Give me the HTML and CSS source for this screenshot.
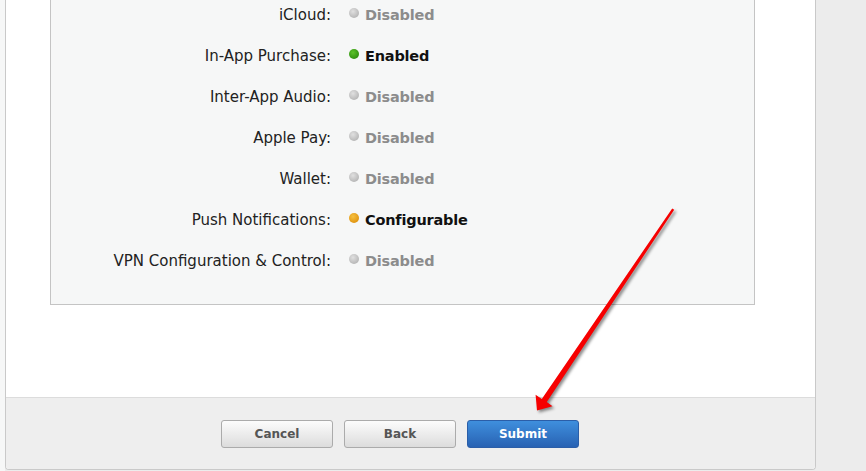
FILE: index.html
```html
<!DOCTYPE html>
<html lang="en">
<head>
    <meta charset="UTF-8">
    <title>App ID Services</title>
    <link rel="stylesheet" href="styles.css">
</head>
<body>
<div class="page">
    <div class="gutter"></div>
    <div class="card">
        <div class="content">
            <div class="services">
                <div class="row">
                    <span class="label">iCloud:</span>
                    <span class="status off"><i class="dot grey"></i>Disabled</span>
                </div>
                <div class="row">
                    <span class="label">In-App Purchase:</span>
                    <span class="status"><i class="dot green"></i>Enabled</span>
                </div>
                <div class="row">
                    <span class="label">Inter-App Audio:</span>
                    <span class="status off"><i class="dot grey"></i>Disabled</span>
                </div>
                <div class="row">
                    <span class="label">Apple Pay:</span>
                    <span class="status off"><i class="dot grey"></i>Disabled</span>
                </div>
                <div class="row">
                    <span class="label">Wallet:</span>
                    <span class="status off"><i class="dot grey"></i>Disabled</span>
                </div>
                <div class="row">
                    <span class="label">Push Notifications:</span>
                    <span class="status"><i class="dot orange"></i>Configurable</span>
                </div>
                <div class="row">
                    <span class="label">VPN Configuration &amp; Control:</span>
                    <span class="status off"><i class="dot grey"></i>Disabled</span>
                </div>
            </div>
        </div>
        <div class="actions">
            <button class="btn">Cancel</button>
            <button class="btn">Back</button>
            <button class="btn primary">Submit</button>
        </div>
    </div>
</div>

<svg class="arrow" width="866" height="471" viewBox="0 0 866 471">
    <polygon points="672.2,208.4 674.2,209.8 546.8,402 552.5,406.3 537,410.5 535.6,394.8 541.8,399"/>
</svg>
</body>
</html>
```

FILE: styles.css
```css
html, body {
    margin: 0;
    height: 471px;
    overflow: hidden;
}

body {
    background: #ececec;
    font-family: 'DejaVu Sans', sans-serif;
    color: #222;
    position: relative;
}

.page {
    display: flex;
    height: 471px;
}

.gutter {
    width: 5px;
    background: #f6f7f7;
}

.card {
    width: 811px;
    height: 470px;
    box-sizing: border-box;
    border: 1px solid #c9c9c9;
    border-top: none;
    border-radius: 0 0 4px 4px;
    background: #fff;
    display: flex;
    flex-direction: column;
    overflow: hidden;
}

.content {
    height: 397px;
}

.services {
    margin: -6px 0 0 44px;
    width: 705px;
    box-sizing: border-box;
    border: 1px solid #c4c4c4;
    border-top: none;
    background: #f6f7f7;
    padding-bottom: 23px;
}

.row {
    display: flex;
    align-items: center;
    height: 41px;
}

.label {
    width: 280px;
    text-align: right;
    font-size: 15px;
    color: #222;
}

.status {
    margin-left: 18px;
    display: flex;
    align-items: center;
    font-size: 14.5px;
    font-weight: bold;
    letter-spacing: -0.2px;
    color: #111;
}

.status.off {
    color: #8c8c8c;
}

.dot {
    width: 10px;
    height: 10px;
    border-radius: 50%;
    margin-right: 6px;
    position: relative;
    top: -2px;
}

.dot.grey {
    background: radial-gradient(circle at 40% 35%, #e0e0e0, #b9b9b9 70%);
}

.dot.green {
    background: radial-gradient(circle at 40% 35%, #5cc22a, #2f8f10 75%);
}

.dot.orange {
    background: radial-gradient(circle at 40% 35%, #f6c040, #e09410 75%);
}

.actions {
    flex: 1;
    border-top: 1px solid #dcdcdc;
    background: #eeeeee;
    display: flex;
    gap: 11px;
    padding: 22px 0 0 215px;
}

.btn {
    width: 112px;
    height: 28px;
    border: 1px solid #ababab;
    border-radius: 3px;
    background: linear-gradient(#fcfcfc, #dcdcdc);
    font-family: 'DejaVu Sans', sans-serif;
    font-size: 12px;
    font-weight: bold;
    color: #555;
    padding: 0;
}

.btn.primary {
    background: linear-gradient(#3f8fdd, #2862b3);
    border-color: #2b5ea8;
    color: #fff;
}

.arrow {
    position: absolute;
    left: 0;
    top: 0;
    pointer-events: none;
}

.arrow polygon {
    fill: #f60000;
    filter: drop-shadow(2px 2px 1.5px rgba(0, 0, 0, 0.45));
}
```
